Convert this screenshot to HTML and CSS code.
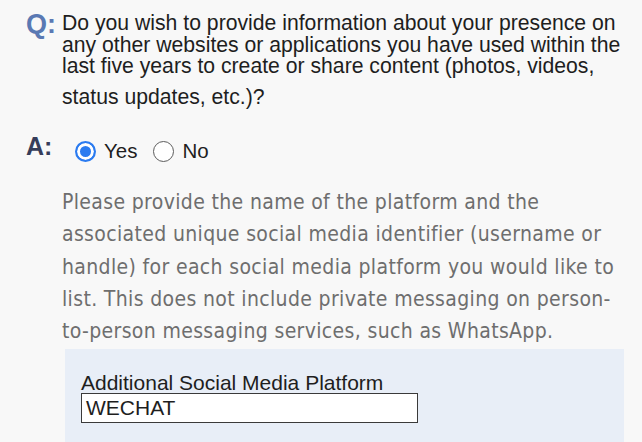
FILE: index.html
```html
<!DOCTYPE html>
<html>
<head>
<meta charset="utf-8">
<link rel="stylesheet" href="styles.css">
</head>
<body>
<div class="page">
  <div class="qa q">
    <div class="label q-label">Q:</div>
    <div class="question">
      <div>Do you wish to provide information about your presence on<br>any other websites or applications you have used within the<br>last five years to create or share content (photos, videos,</div>
      <div class="last">status updates, etc.)?</div>
    </div>
  </div>
  <div class="qa a">
    <div class="label a-label">A:</div>
    <div class="answer">
      <div class="radios">
        <span class="radio checked"></span><span class="opt">Yes</span>
        <span class="radio"></span><span class="opt">No</span>
      </div>
      <p class="help">Please provide the name of the platform and the<br>associated unique social media identifier (username or<br>handle) for each social media platform you would like to<br>list. This does not include private messaging on person-<br>to-person messaging services, such as WhatsApp.</p>
      <div class="box">
        <div class="field-label">Additional Social Media Platform</div>
        <div class="input">WECHAT</div>
      </div>
    </div>
  </div>
</div>
</body>
</html>
```
FILE: styles.css
```css
html, body { margin: 0; padding: 0; }
body { background: #f8f8f8; width: 642px; height: 442px; overflow: hidden; font-family: "Liberation Sans", Arial, sans-serif; }
.page { padding: 10px 0 0 26px; }
.qa { display: flex; }
.label { width: 36px; flex: none; font-weight: bold; }
.q-label { color: #5a79b3; font-size: 27px; line-height: 28px; }
.question { font-size: 21.2px; line-height: 21.5px; color: #1e1e1e; white-space: nowrap; padding-top: 2px; }
.question .last { margin-top: 9px; }
.a { margin-top: 25px; }
.a-label { color: #363d5a; font-size: 25px; line-height: 28px; }
.answer { flex: 1; }
.radios { display: flex; align-items: center; margin-left: 13px; margin-top: 4px; height: 30px; }
.radio { width: 21px; height: 21px; border: 1.5px solid #5c5c5c; border-radius: 50%; background: #fff; box-sizing: border-box; flex: none; }
.radio.checked { border: 2px solid #2b7bf0; background: #2b7bf0; box-shadow: inset 0 0 0 3px #fff; }
.opt { font-size: 20.5px; color: #1e1e1e; margin: 0 16px 0 8px; }
.help { margin: 20px 0 0; font-family: "DejaVu Sans Condensed", "DejaVu Sans", sans-serif; font-stretch: condensed; font-size: 21px; letter-spacing: 0.35px; line-height: 32.3px; color: #6e6e6e; white-space: nowrap; }
.box { margin: 2px 0 0 3px; width: 559px; height: 94px; background: #e8eef7; padding: 24px 0 0 16px; box-sizing: border-box; }
.field-label { font-size: 21px; color: #1e1e1e; line-height: 20px; }
.input { margin-top: 0; width: 337px; height: 30px; box-sizing: border-box; border: 1.5px solid #3a3a3a; background: #fff; font-size: 21px; line-height: 27px; padding-left: 4px; color: #1e1e1e; }
```
